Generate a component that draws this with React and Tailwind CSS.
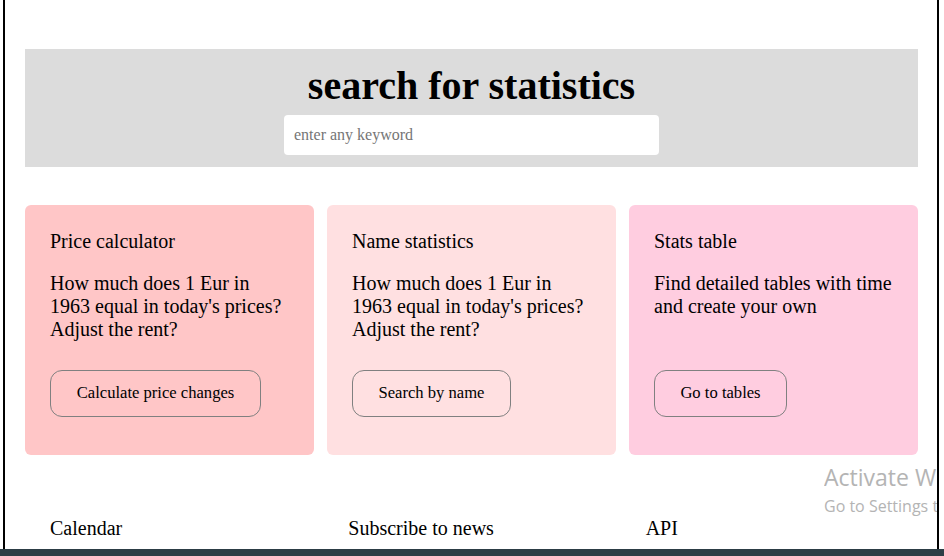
export default function App() {
  const serif = { fontFamily: '"Liberation Serif", "Times New Roman", serif' };
  const cards = [
    {
      bg: "bg-[#ffc6c7]",
      title: "Price calculator",
      text: ["How much does 1 Eur in", "1963 equal in today's prices?", "Adjust the rent?"],
      btn: "Calculate price changes",
      bw: "w-[211px]",
    },
    {
      bg: "bg-[#ffe0e1]",
      title: "Name statistics",
      text: ["How much does 1 Eur in", "1963 equal in today's prices?", "Adjust the rent?"],
      btn: "Search by name",
      bw: "w-[159px]",
    },
    {
      bg: "bg-[#ffcde0]",
      title: "Stats table",
      text: ["Find detailed tables with time", "and create your own"],
      btn: "Go to tables",
      bw: "w-[133px]",
    },
  ];
  return (
    <div className="relative w-[944px] h-[556px] overflow-hidden bg-white text-black" style={serif}>
      <div className="pl-[3px] h-[549px]">
        <div className="w-[936px] h-[549px] border-x-2 border-black pl-[20px] pr-[19px] pt-[49px]">
          <div className="bg-[#dcdcdc] h-[118px] flex flex-col items-center pt-[15px]">
            <h1 className="text-[40px] font-bold leading-[44px]">search for statistics</h1>
            <div className="mt-[7px] w-[375px] h-[40px] bg-white rounded-[4px] flex items-center px-[10px] text-[16px] text-[#757575]">
              enter any keyword
            </div>
          </div>
          <div className="mt-[38px] grid grid-cols-3 gap-[13px]">
            {cards.map((c) => (
              <div key={c.title} className={`${c.bg} h-[250px] rounded-[6px] px-[25px] pt-[25px] flex flex-col`}>
                <div className="text-[20px] leading-[23px]">{c.title}</div>
                <div className="mt-[19px] text-[20px] leading-[23px] h-[92px]">
                  {c.text.map((t) => (
                    <div key={t}>{t}</div>
                  ))}
                </div>
                <div className={`mt-[6px] ${c.bw} h-[47px] border border-[#808080] rounded-[12px] flex items-center justify-center text-[16.6px]`}>
                  {c.btn}
                </div>
              </div>
            ))}
          </div>
          <div className="mt-[62px] grid grid-cols-3 pl-[25px] text-[20px] leading-[23px]">
            <div>Calendar</div>
            <div className="pl-[9px]">Subscribe to news</div>
            <div className="pl-[17px]">API</div>
          </div>
        </div>
      </div>
      <div className="h-[7px] bg-[#2c3d45]"></div>
      <div className="absolute left-[824px] top-[462px] w-[113px] overflow-hidden text-[#b4b4b4] whitespace-nowrap" style={{ fontFamily: '"Open Sans", "Noto Sans", sans-serif' }}>
        <div className="text-[23px] leading-[30px]">Activate Windows</div>
        <div className="mt-[3px] text-[16px] leading-[22px]">Go to Settings to activate Windows.</div>
      </div>
    </div>
  );
}
